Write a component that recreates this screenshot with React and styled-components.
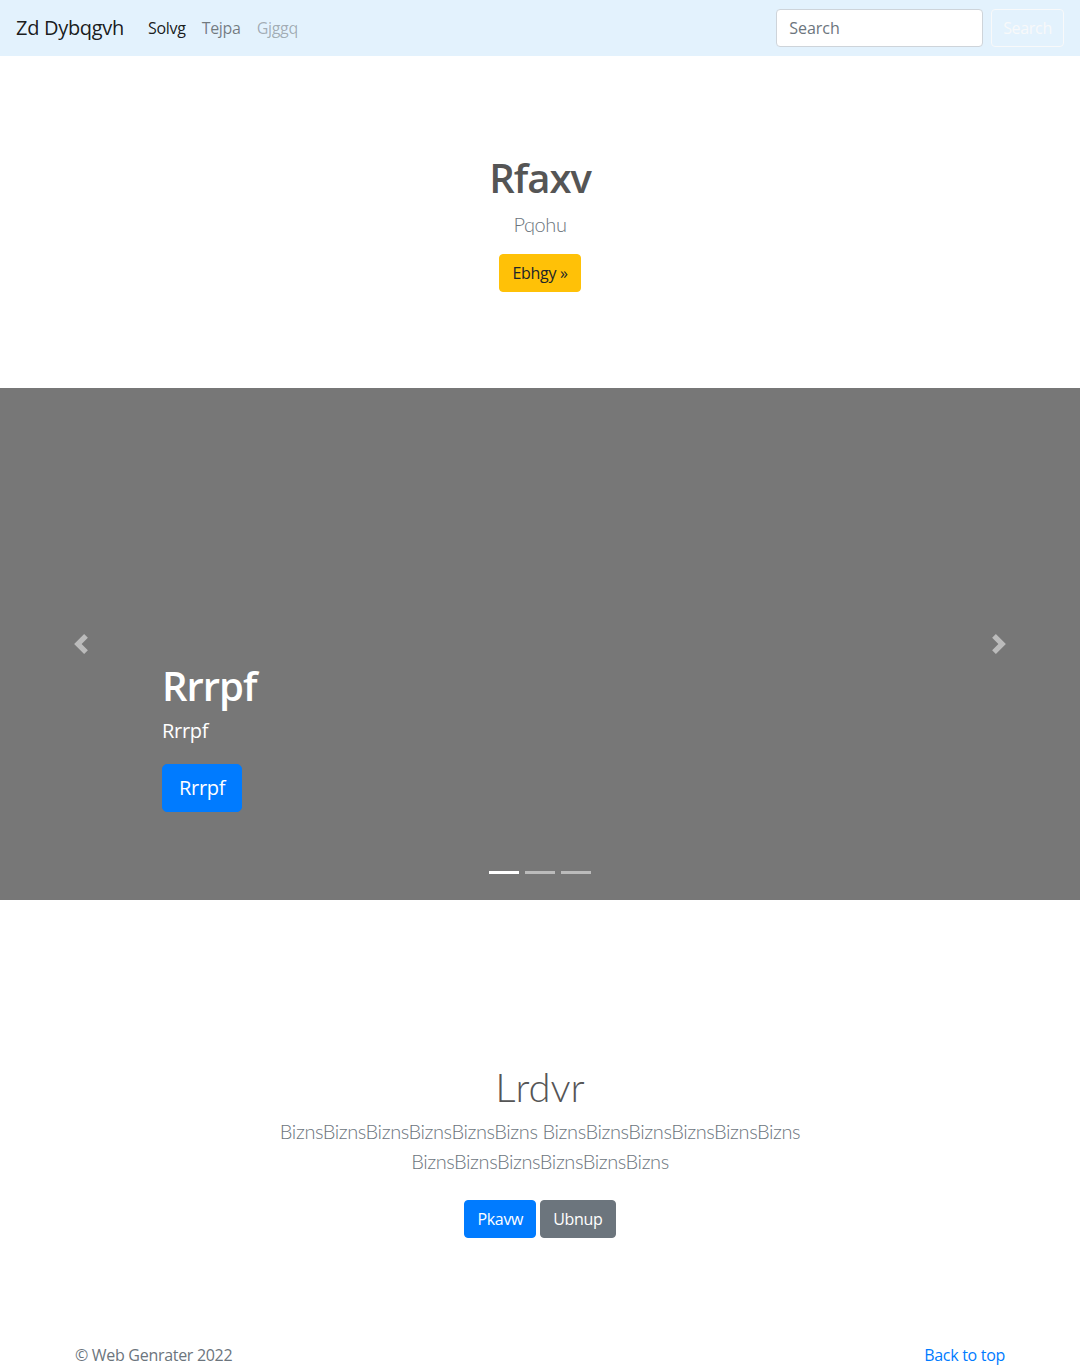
import React from "react";
import styled, { createGlobalStyle } from "styled-components";

const Global = createGlobalStyle`
  *, *::before, *::after { box-sizing: border-box; }
  body {
    margin: 0;
    font-family: "Open Sans", "Noto Sans", Arial, sans-serif;
    font-size: 16px;
    line-height: 1.5;
    color: #212529;
    background: #fff;
  }
  h1, p { margin: 0; }
`;

const lightFont = `Lato, "Open Sans", Arial, sans-serif`;

const Navbar = styled.nav`
  height: 56px;
  background: #e3f2fd;
  display: flex;
  align-items: center;
  padding: 8px 16px;
`;

const Brand = styled.a`
  font-size: 20px;
  line-height: 30px;
  color: rgba(0, 0, 0, 0.9);
  margin-right: 16px;
  letter-spacing: -0.3px;
  text-decoration: none;
`;

const NavList = styled.div`
  display: flex;
  flex: 1;
`;

const NavLink = styled.a`
  padding: 8px;
  text-decoration: none;
  letter-spacing: -0.3px;
  color: ${(p) =>
    p.$state === "active"
      ? "rgba(0,0,0,0.9)"
      : p.$state === "disabled"
      ? "rgba(0,0,0,0.3)"
      : "rgba(0,0,0,0.5)"};
`;

const SearchForm = styled.form`
  display: flex;
  align-items: center;
  gap: 8px;
`;

const SearchInput = styled.input`
  width: 207px;
  height: 38px;
  padding: 6px 12px;
  font: inherit;
  font-size: 16px;
  color: #495057;
  border: 1px solid #ced4da;
  border-radius: 4px;
  background: #fff;
  &::placeholder { color: #6c757d; }
`;

const Button = styled.a`
  display: inline-block;
  text-decoration: none;
  font-size: ${(p) => (p.$lg ? "20px" : "16px")};
  line-height: ${(p) => (p.$lg ? "30px" : "24px")};
  padding: ${(p) => (p.$lg ? "8px 16px" : "6px 12px")};
  border-radius: ${(p) => (p.$lg ? "5px" : "4px")};
  border: 1px solid ${(p) => p.$bg};
  background: ${(p) => (p.$fill ? p.$bg : "transparent")};
  color: ${(p) => p.$color};
  letter-spacing: -0.3px;
  cursor: pointer;
`;

const NavButton = styled(Button)`
  padding: 6px 11px;
`;

const Hero = styled.section`
  padding: 98px 0 96px;
  text-align: center;
`;

const HeroTitle = styled.h1`
  font-size: 40px;
  line-height: 48px;
  font-weight: 600;
  color: #555;
  letter-spacing: -1px;
`;

const Lead = styled.p`
  font-family: ${lightFont};
  font-size: 20px;
  line-height: 30px;
  font-weight: 300;
  color: #6c757d;
  letter-spacing: -0.4px;
  margin: 7px auto 15px;
`;

const Carousel = styled.div`
  position: relative;
  height: 512px;
  background: #777;
  display: flex;
  align-items: flex-end;
  padding: 0 15% 88px;
`;

const Caption = styled.div`
  color: #fff;
  text-align: left;
`;

const CaptionTitle = styled.h1`
  font-size: 40px;
  line-height: 48px;
  font-weight: 600;
  letter-spacing: -1px;
`;

const CaptionText = styled.p`
  font-size: 20px;
  line-height: 30px;
  letter-spacing: -0.3px;
  margin: 6px 0 18px;
`;

const Control = styled.a`
  position: absolute;
  top: 0;
  bottom: 0;
  ${(p) => (p.$side === "prev" ? "left: 0;" : "right: 0;")}
  width: 15%;
  display: flex;
  align-items: center;
  justify-content: center;
  opacity: 0.5;
`;

const Indicators = styled.ol`
  position: absolute;
  left: 0;
  right: 0;
  bottom: 26px;
  display: flex;
  justify-content: center;
  gap: 6px;
  margin: 0;
  padding: 0;
  list-style: none;
`;

const Indicator = styled.li`
  width: 30px;
  height: 3px;
  background: #fff;
  opacity: ${(p) => (p.$active ? 1 : 0.5)};
`;

const Album = styled.section`
  padding: 163px 0 105px;
  text-align: center;
`;

const AlbumTitle = styled.h1`
  font-family: ${lightFont};
  font-size: 40px;
  line-height: 48px;
  font-weight: 300;
  color: #555;
`;

const Lead2 = styled(Lead)`
  margin: 5px auto 24px;
  max-width: 610px;
`;

const ButtonRow = styled.div`
  display: flex;
  justify-content: center;
  gap: 4px;
`;

const Footer = styled.footer`
  width: 960px;
  margin: 0 auto;
  padding: 0 15px 32px;
  display: flex;
  justify-content: space-between;
  color: #6c757d;
  letter-spacing: -0.3px;
`;

const FooterLink = styled.a`
  color: #007bff;
  text-decoration: none;
`;

const Chevron = ({ dir }) => (
  <svg width="20" height="20" viewBox="0 0 8 8" fill="#fff">
    {dir === "prev" ? (
      <path d="M5.25 0l-4 4 4 4 1.5-1.5L4.25 4l2.5-2.5L5.25 0z" />
    ) : (
      <path d="M2.75 0l-1.5 1.5L3.75 4l-2.5 2.5L2.75 8l4-4-4-4z" />
    )}
  </svg>
);

export default function App() {
  return (
    <>
      <Global />
      <Navbar>
        <Brand href="#">Zd Dybqgvh</Brand>
        <NavList>
          <NavLink $state="active" href="#">Solvg</NavLink>
          <NavLink href="#">Tejpa</NavLink>
          <NavLink $state="disabled">Gjggq</NavLink>
        </NavList>
        <SearchForm onSubmit={(e) => e.preventDefault()}>
          <SearchInput placeholder="Search" />
          <NavButton $bg="#f8f9fa" $color="#f8f9fa">Search</NavButton>
        </SearchForm>
      </Navbar>

      <Hero>
        <HeroTitle>Rfaxv</HeroTitle>
        <Lead>Pqohu</Lead>
        <Button $fill $bg="#ffc107" $color="#212529">Ebhgy »</Button>
      </Hero>

      <Carousel>
        <Caption>
          <CaptionTitle>Rrrpf</CaptionTitle>
          <CaptionText>Rrrpf</CaptionText>
          <Button $lg $fill $bg="#007bff" $color="#fff">Rrrpf</Button>
        </Caption>
        <Control $side="prev"><Chevron dir="prev" /></Control>
        <Control $side="next"><Chevron dir="next" /></Control>
        <Indicators>
          <Indicator $active />
          <Indicator />
          <Indicator />
        </Indicators>
      </Carousel>

      <Album>
        <AlbumTitle>Lrdvr</AlbumTitle>
        <Lead2>
          BiznsBiznsBiznsBiznsBiznsBizns BiznsBiznsBiznsBiznsBiznsBizns BiznsBiznsBiznsBiznsBiznsBizns
        </Lead2>
        <ButtonRow>
          <Button $fill $bg="#007bff" $color="#fff">Pkavw</Button>
          <Button $fill $bg="#6c757d" $color="#fff">Ubnup</Button>
        </ButtonRow>
      </Album>

      <Footer>
        <span>© Web Genrater 2022</span>
        <FooterLink href="#">Back to top</FooterLink>
      </Footer>
    </>
  );
}
